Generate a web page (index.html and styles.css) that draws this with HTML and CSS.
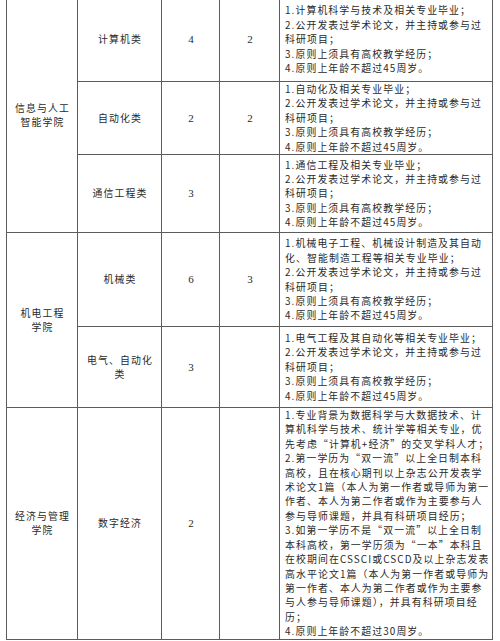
FILE: index.html
```html
<!DOCTYPE html>
<html lang="zh-CN">
<head>
<meta charset="utf-8">
<title>招聘岗位</title>
<link rel="stylesheet" href="styles.css">
</head>
<body>
<table class="sheet">
  <colgroup>
    <col class="c-college">
    <col class="c-major">
    <col class="c-num">
    <col class="c-num2">
    <col class="c-req">
  </colgroup>
  <tbody>
    <tr class="r1">
      <td class="college" rowspan="3">信息与人工<br>智能学院</td>
      <td class="major">计算机类</td>
      <td class="num">4</td>
      <td class="num">2</td>
      <td class="req">1.计算机科学与技术及相关专业毕业；<br>2.公开发表过学术论文，并主持或参与过<br>科研项目；<br>3.原则上须具有高校教学经历；<br>4.原则上年龄不超过45周岁。</td>
    </tr>
    <tr class="r2">
      <td class="major">自动化类</td>
      <td class="num">2</td>
      <td class="num">2</td>
      <td class="req">1.自动化及相关专业毕业；<br>2.公开发表过学术论文，并主持或参与过<br>科研项目；<br>3.原则上须具有高校教学经历；<br>4.原则上年龄不超过45周岁。</td>
    </tr>
    <tr class="r3">
      <td class="major">通信工程类</td>
      <td class="num">3</td>
      <td class="num"></td>
      <td class="req">1.通信工程及相关专业毕业；<br>2.公开发表过学术论文，并主持或参与过<br>科研项目；<br>3.原则上须具有高校教学经历；<br>4.原则上年龄不超过45周岁。</td>
    </tr>
    <tr class="r4">
      <td class="college" rowspan="2">机电工程<br>学院</td>
      <td class="major">机械类</td>
      <td class="num">6</td>
      <td class="num">3</td>
      <td class="req">1.机械电子工程、机械设计制造及其自动<br>化、智能制造工程等相关专业毕业；<br>2.公开发表过学术论文，并主持或参与过<br>科研项目；<br>3.原则上须具有高校教学经历；<br>4.原则上年龄不超过45周岁。</td>
    </tr>
    <tr class="r5">
      <td class="major">电气、自动化<br>类</td>
      <td class="num">3</td>
      <td class="num"></td>
      <td class="req">1.电气工程及其自动化等相关专业毕业；<br>2.公开发表过学术论文，并主持或参与过<br>科研项目；<br>3.原则上须具有高校教学经历；<br>4.原则上年龄不超过45周岁。</td>
    </tr>
    <tr class="r6">
      <td class="college">经济与管理<br>学院</td>
      <td class="major">数字经济</td>
      <td class="num">2</td>
      <td class="num"></td>
      <td class="req">1.专业背景为数据科学与大数据技术、计<br>算机科学与技术、统计学等相关专业，优<br>先考虑“计算机+经济”的交叉学科人才；<br>2.第一学历为“双一流”以上全日制本科<br>高校，且在核心期刊以上杂志公开发表学<br>术论文1篇（本人为第一作者或导师为第一<br>作者、本人为第二作者或作为主要参与人<br>参与导师课题，并具有科研项目经历；<br>3.如第一学历不是“双一流”以上全日制<br>本科高校，第一学历须为“一本”本科且<br>在校期间在CSSCI或CSCD及以上杂志发表<br>高水平论文1篇（本人为第一作者或导师为<br>第一作者、本人为第二作者或作为主要参<br>与人参与导师课题），并具有科研项目经<br>历；<br>4.原则上年龄不超过30周岁。</td>
    </tr>
  </tbody>
</table>
</body>
</html>
```

FILE: styles.css
```css
html, body {
  margin: 0;
  padding: 0;
  background: #ffffff;
}

body {
  width: 500px;
  height: 641px;
  overflow: hidden;
  font-family: "Noto Sans CJK SC", "Liberation Serif", sans-serif;
  font-size: 9.9px;
  letter-spacing: 1.1px;
  line-height: 14.4px;
  color: #2a2a2a;
}

.sheet {
  border-collapse: collapse;
  table-layout: fixed;
  width: 486px;
  margin: -3px 0 0 6px;
}

.c-college { width: 71px; }
.c-major { width: 84px; }
.c-num { width: 58px; }
.c-num2 { width: 60px; }
.c-req { width: 213px; }

.sheet td {
  border: 1px solid #5c5c5c;
  padding: 0 3px 0 4px;
  vertical-align: middle;
  text-align: center;
}

.sheet td.num {
  font-family: "Liberation Serif", "Noto Sans CJK SC", serif;
  font-size: 11px;
  letter-spacing: 0;
}

.sheet td.req {
  text-align: left;
  white-space: nowrap;
  padding: 0 3px 0 5px;
}

.r1 { height: 84px; }
.r2 { height: 72px; }
.r3 { height: 78px; }
.r4 { height: 94px; }
.r5 { height: 81px; }
.r6 { height: 231px; }
```
